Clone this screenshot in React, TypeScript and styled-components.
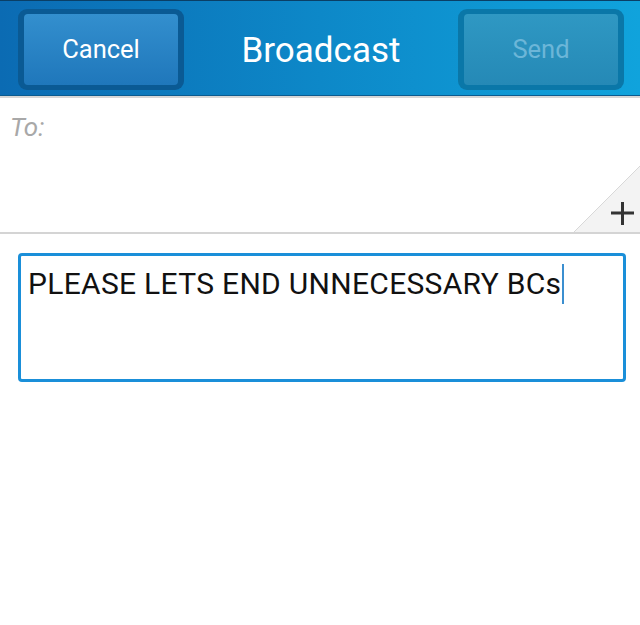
import React from "react";
import styled, { createGlobalStyle } from "styled-components";

const GlobalStyle = createGlobalStyle`
  html, body {
    margin: 0;
    padding: 0;
    background: #ffffff;
    font-family: Roboto, "Liberation Sans", sans-serif;
  }
`;

const Screen = styled.div`
  width: 640px;
  height: 625px;
  background: #ffffff;
  display: flex;
  flex-direction: column;
  overflow: hidden;
`;

const Header = styled.header`
  height: 96px;
  flex-shrink: 0;
  box-sizing: border-box;
  border-top: 1px solid #0a3f66;
  border-bottom: 1px solid #0b5b8f;
  background: linear-gradient(90deg, #0b6bb3 0%, #0d88c8 50%, #10a3dc 100%);
  display: flex;
  align-items: center;
  justify-content: space-between;
  padding: 0 16px 0 18px;
`;

const HeaderShade = styled.div`
  height: 2px;
  flex-shrink: 0;
  background: #d6d6d6;
`;

const ButtonRing = styled.div<{ $muted?: boolean }>`
  width: 166px;
  height: 81px;
  box-sizing: border-box;
  padding: 5px 6px;
  border-radius: 9px;
  background: ${(p) => (p.$muted ? "#0a77a8" : "#0a5a94")};
  margin-top: 2px;
`;

const HeaderButton = styled.button<{ $muted?: boolean }>`
  width: 100%;
  height: 100%;
  border: none;
  border-radius: 4px;
  background: ${(p) =>
    p.$muted
      ? "linear-gradient(180deg, #2f98c3 0%, #2589b6 100%)"
      : "linear-gradient(180deg, #338fce 0%, #1f77bb 100%)"};
  color: ${(p) => (p.$muted ? "#6cb6d8" : "#ffffff")};
  font-family: Roboto, "Liberation Sans", sans-serif;
  font-size: 25.5px;
  padding: 0;
  cursor: pointer;
`;

const Title = styled.h1`
  margin: 4px 0 0;
  color: #ffffff;
  font-weight: 400;
  font-size: 35px;
  font-family: Roboto, "Liberation Sans", sans-serif;
`;

const ToField = styled.div`
  position: relative;
  height: 136px;
  flex-shrink: 0;
  box-sizing: border-box;
  border-bottom: 2px solid #d4d4d4;
  padding: 14px 10px;
  overflow: hidden;
`;

const ToLabel = styled.span`
  font-style: italic;
  font-size: 26px;
  color: #a8a8a8;
`;

const AddCorner = styled.div`
  position: absolute;
  right: 0;
  bottom: 0;
  width: 66px;
  height: 66px;
`;

const ComposeArea = styled.div`
  padding: 19px 14px 0 18px;
`;

const MessageBox = styled.div`
  height: 129px;
  box-sizing: border-box;
  border: 3px solid #1a8fd9;
  border-radius: 4px;
  padding: 10px 7px;
  font-size: 30px;
  letter-spacing: 0.3px;
  color: #111111;
  display: flex;
  align-items: flex-start;
`;

const Caret = styled.span`
  display: inline-block;
  width: 2px;
  height: 40px;
  margin-left: 1px;
  margin-top: -2px;
  background: #3b8fd0;
`;

export default function App() {
  return (
    <Screen>
      <GlobalStyle />
      <Header>
        <ButtonRing>
          <HeaderButton>Cancel</HeaderButton>
        </ButtonRing>
        <Title>Broadcast</Title>
        <ButtonRing $muted>
          <HeaderButton $muted>Send</HeaderButton>
        </ButtonRing>
      </Header>
      <HeaderShade />
      <ToField>
        <ToLabel>To:</ToLabel>
        <AddCorner>
          <svg width="66" height="66" viewBox="0 0 66 66">
            <polygon points="66,0 66,66 0,66" fill="#f3f3f3" />
            <line x1="66" y1="0" x2="0" y2="66" stroke="#d8d8d8" strokeWidth="1" />
            <path d="M37 47 H60 M48.5 36 V59" stroke="#333333" strokeWidth="3" />
          </svg>
        </AddCorner>
      </ToField>
      <ComposeArea>
        <MessageBox>
          <span>PLEASE LETS END UNNECESSARY BCs</span>
          <Caret />
        </MessageBox>
      </ComposeArea>
    </Screen>
  );
}
